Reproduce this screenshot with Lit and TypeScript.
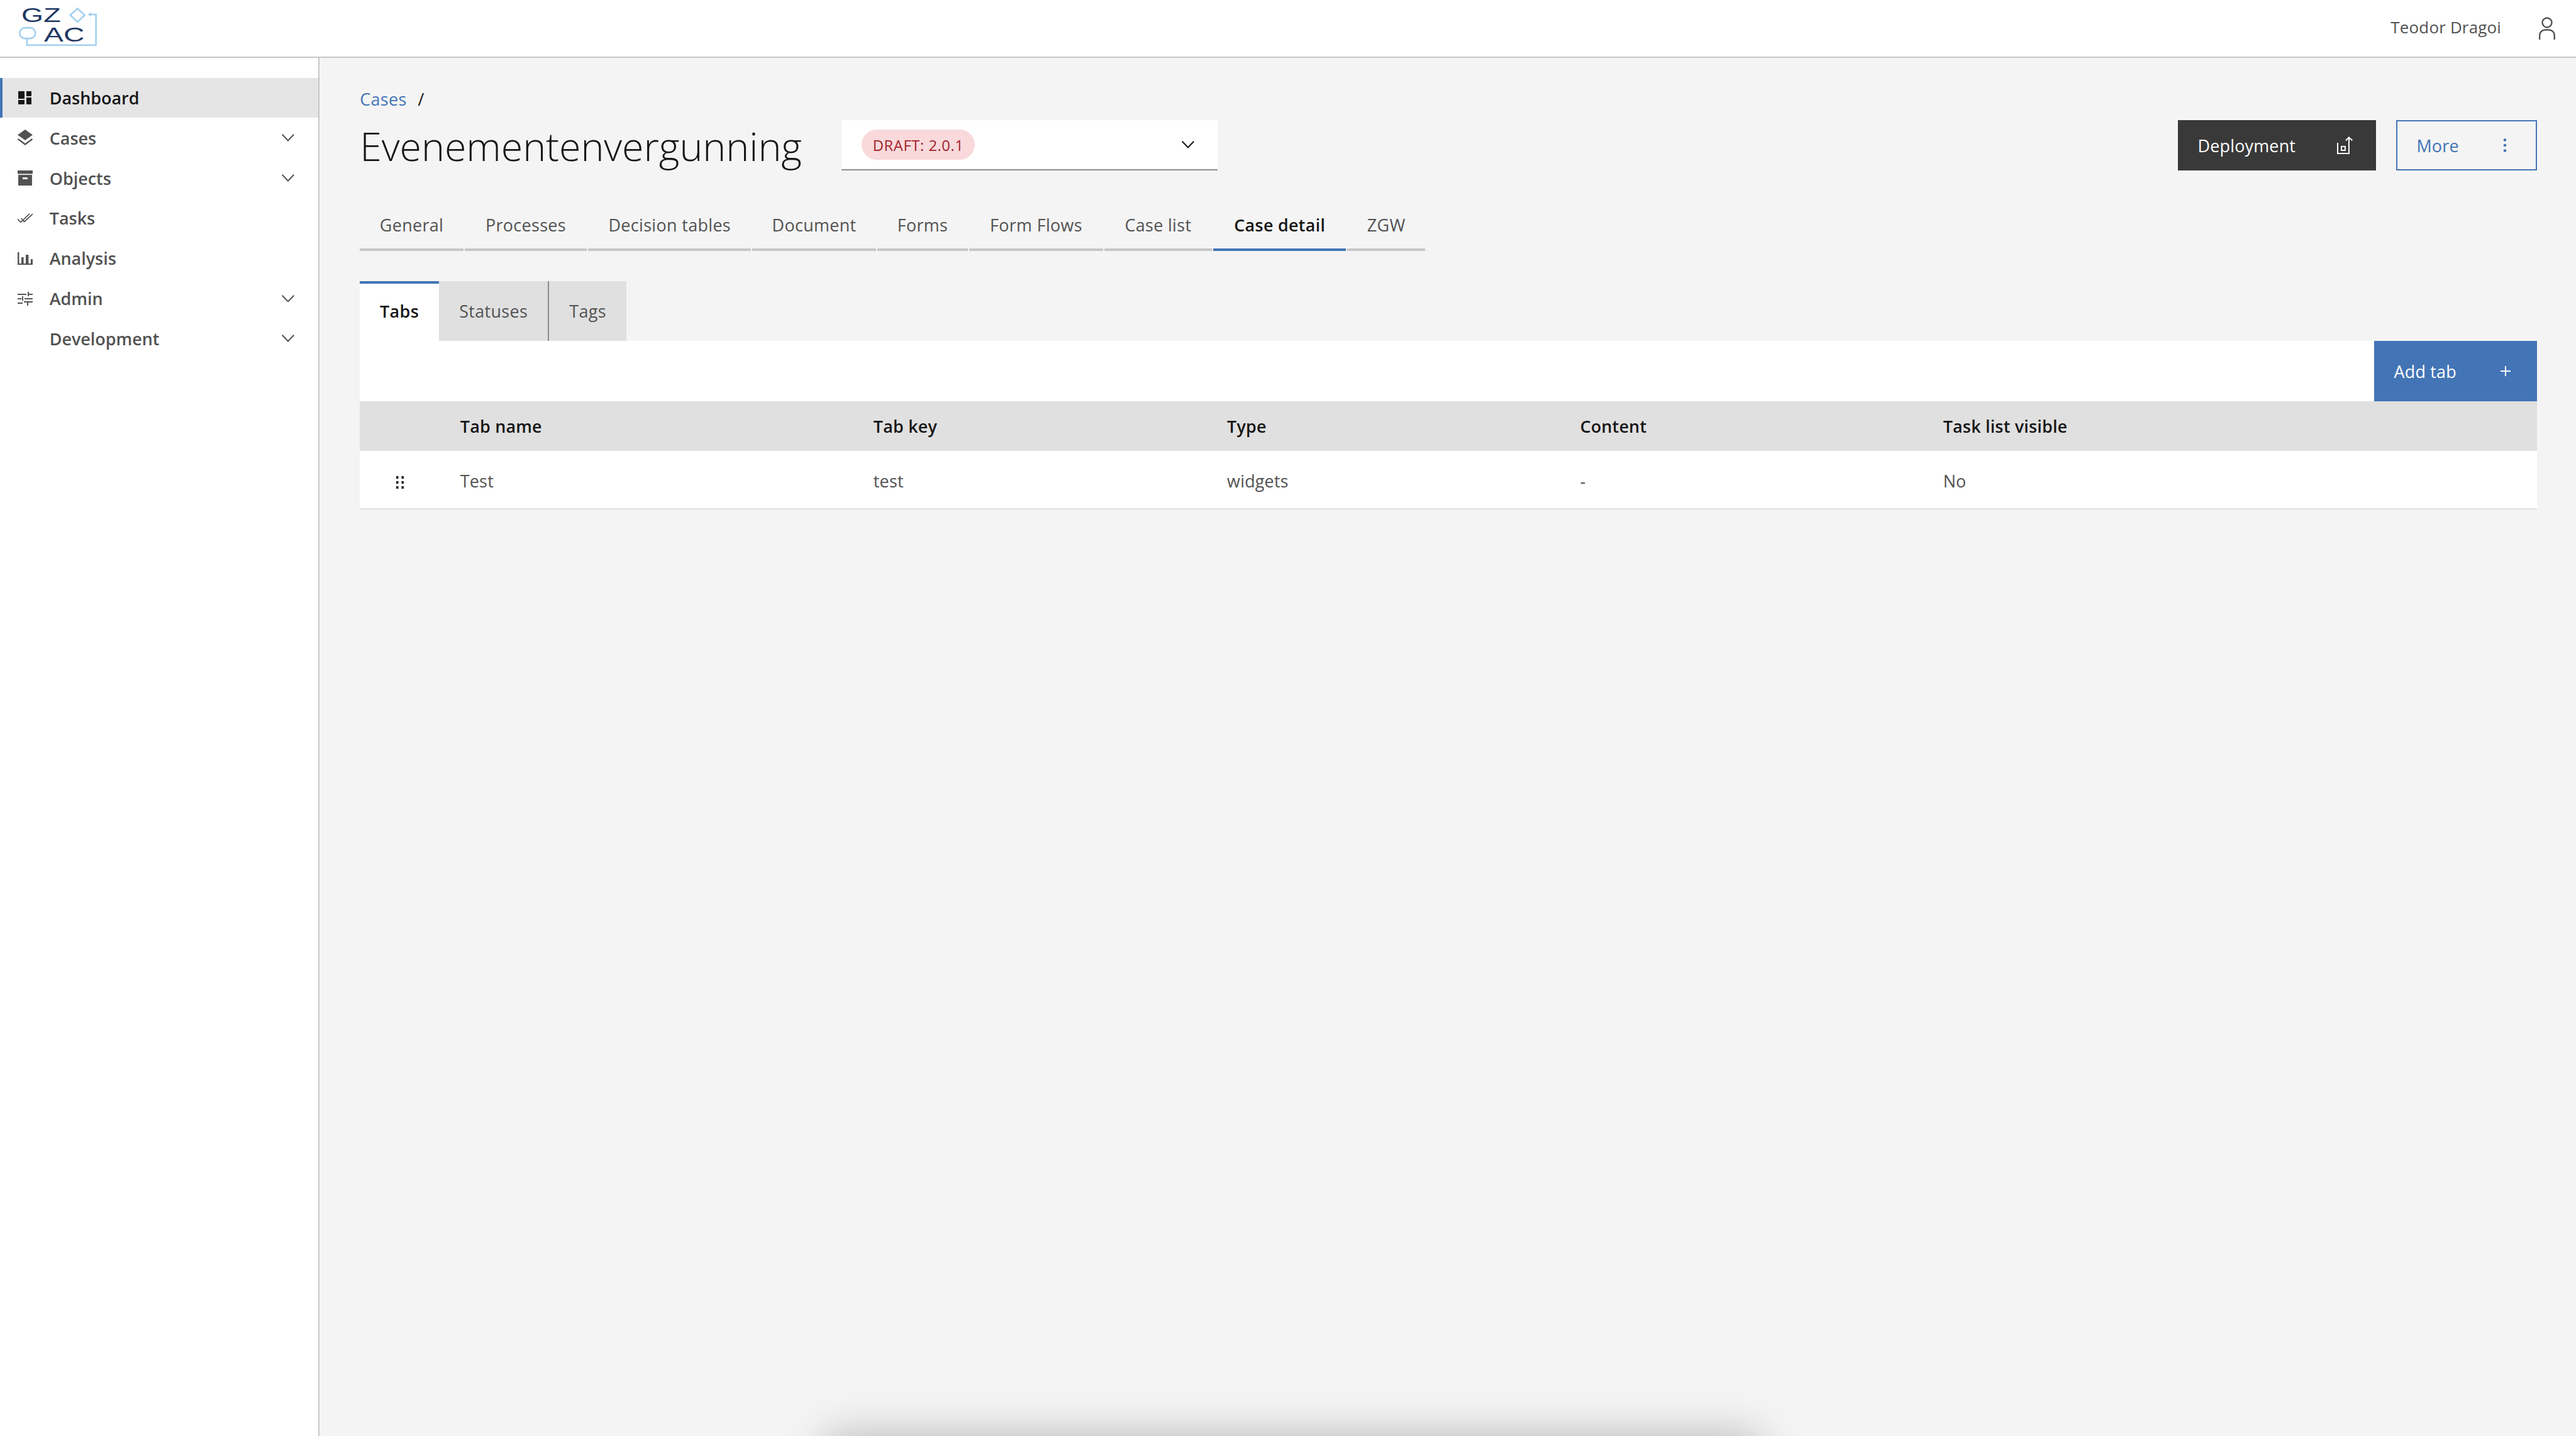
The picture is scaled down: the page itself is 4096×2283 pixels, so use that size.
import { LitElement, html, css, svg } from "lit";
import { customElement } from "lit/decorators.js";

const chevron = html`<svg class="chev" viewBox="0 0 20 12" width="20" height="12"><polyline points="0.7,0.7 10,10.5 19.3,0.7" fill="none" stroke="currentColor" stroke-width="2"/></svg>`;

const icons: Record<string, unknown> = {
  dashboard: svg`<rect x="29" y="145" width="10" height="12"/><rect x="29" y="159" width="10" height="7"/><rect x="42" y="145" width="8" height="8"/><rect x="42" y="155" width="8" height="11"/>`,
  cases: svg`<polygon points="40,207 52,215.5 40,224 28,215.5"/><polyline points="28.5,222 40,230.5 51.5,222" fill="none" stroke="currentColor" stroke-width="2.4"/>`,
  objects: svg`<rect x="28" y="272" width="24" height="5.5"/><path fill-rule="evenodd" d="M29 279h22v17H29z M36 283v3h8v-3z"/>`,
  tasks: svg`<g fill="none" stroke="currentColor" stroke-width="1.7"><polyline points="27,348.5 33,354.5 47,341"/><polyline points="33.5,348 38.5,353.5 52.5,341"/></g>`,
  analysis: svg`<rect x="28" y="402" width="2.4" height="20"/><rect x="28" y="420" width="24" height="2"/><rect x="34" y="410" width="3.6" height="11"/><rect x="41" y="406" width="4.4" height="15"/><rect x="49" y="413" width="3" height="8"/>`,
  admin: svg`<rect x="28" y="468" width="14" height="2"/><rect x="44" y="465" width="2" height="7"/><rect x="46" y="468" width="6" height="2"/><rect x="28" y="475" width="6" height="2"/><rect x="35" y="472" width="2" height="7"/><rect x="39" y="475" width="13" height="2"/><rect x="28" y="482" width="8" height="2"/><rect x="38" y="480" width="14" height="2"/><rect x="43" y="480" width="2" height="7"/>`,
};

const nav = [
  { label: "Dashboard", icon: "dashboard", cy: 156, active: true },
  { label: "Cases", icon: "cases", cy: 220, more: true },
  { label: "Objects", icon: "objects", cy: 284, more: true },
  { label: "Tasks", icon: "tasks", cy: 348 },
  { label: "Analysis", icon: "analysis", cy: 412 },
  { label: "Admin", icon: "admin", cy: 476, more: true },
  { label: "Development", icon: "", cy: 540, more: true },
];

const tabs = [
  { label: "General", w: 165 },
  { label: "Processes", w: 195 },
  { label: "Decision tables", w: 260 },
  { label: "Document", w: 197 },
  { label: "Forms", w: 145 },
  { label: "Form Flows", w: 213 },
  { label: "Case list", w: 172 },
  { label: "Case detail", w: 212, active: true },
  { label: "ZGW", w: 124 },
];

const cols = ["Tab name", "Tab key", "Type", "Content", "Task list visible"];
const cells = ["Test", "test", "widgets", "-", "No"];

@customElement("app-root")
export class AppRoot extends LitElement {
  static styles = css`
    :host { display: block; width: 4096px; height: 2283px; overflow: hidden; }
    * { box-sizing: border-box; }
    .page {
      zoom: 0.997; width: 4108px; height: 2290px; display: flex; flex-direction: column;
      position: relative; overflow: hidden; background: #f4f4f4; color: #525252;
      font-family: "Open Sans", "Noto Sans", sans-serif; font-size: 27px; letter-spacing: 0.2px;
    }
    header {
      height: 92px; flex: none; background: #fff; border-bottom: 2.01px solid #c6c6c6;
      display: flex; align-items: center; padding: 0 33px 0 28px;
    }
    .logo { display: block; margin-right: auto; }
    .user { margin-right: 60px; font-size: 26px; padding-bottom: 4px; }
    .user-icon { display: block; color: #525252; }
    .body { flex: 1; display: flex; min-height: 0; }
    aside {
      width: 510px; flex: none; background: #fff; border-right: 2.01px solid #c6c6c6; padding-top: 32px;
    }
    .nav {
      height: 64px; display: flex; align-items: center; font-weight: 600; padding-right: 39px; letter-spacing: 0;
    }
    .nav.active { background: #e5e5e5; color: #161616; box-shadow: inset 4px 0 0 #4375b6; }
    .nav-icon { width: 24px; height: 28px; margin-left: 28px; margin-right: 27px; flex: none; fill: currentColor; }
    .chev { margin-left: auto; display: block; }
    .nav .chev { color: #525252; }
    main { flex: 1; min-width: 0; padding: 46px 62px 0 64px; }
    .crumb { height: 40px; display: flex; align-items: center; gap: 18px; color: #4375b6; letter-spacing: 0.35px; }
    .crumb span { color: #161616; }
    .head { height: 80px; margin-top: 14px; display: flex; align-items: center; }
    h1 { margin: 0; font-size: 63px; font-weight: 300; color: #161616; letter-spacing: -0.1px; width: 768px; white-space: nowrap; }
    .select {
      width: 600px; height: 80px; background: #fff; border-bottom: 2.01px solid #8d8d8d;
      display: flex; align-items: center; padding: 0 37px 0 32px; color: #161616;
    }
    .badge {
      height: 48px; width: 181px; border-radius: 24px; background: #f9d9db; color: #a2252b;
      font-size: 24px; display: flex; align-items: center; justify-content: center; letter-spacing: 0.5px;
    }
    .actions { margin-left: auto; display: flex; gap: 32px; }
    .btn { height: 80px; display: flex; align-items: center; justify-content: space-between; }
    .deploy { width: 316px; background: #393939; color: #fff; padding: 0 37px 0 32px; }
    .more { width: 225px; border: 2.01px solid #4375b6; color: #4375b6; padding: 0 46px 0 31px; }
    .tabs { display: flex; gap: 2px; height: 80px; margin-top: 48px; }
    .tab {
      display: flex; align-items: center; justify-content: center; padding-top: 1px;
      border-bottom: 4.02px solid #c6c6c6; white-space: nowrap; letter-spacing: 0.35px;
    }
    .tab.active { border-color: #4375b6; color: #161616; font-weight: 600; letter-spacing: 0.3px; }
    .ctabs { display: flex; height: 96px; margin-top: 48px; letter-spacing: 0.35px; }
    .ctab { display: flex; align-items: center; justify-content: center; background: #e0e0e0; }
    .ctab.on { width: 126px; background: #fff; border-top: 4.02px solid #4375b6; color: #161616; font-weight: 600; padding-bottom: 4px; }
    .ctab.st { width: 176px; border-right: 2.01px solid #8d8d8d; }
    .ctab.tg { width: 123px; }
    .toolbar { height: 96px; background: #fff; display: flex; justify-content: flex-end; }
    .add { width: 260px; height: 96px; background: #4375b6; color: #fff; padding: 0 42px 0 32px; }
    .row {
      display: grid; grid-template-columns: 160px 659px 564px 563px 579px 1fr; align-items: center;
    }
    .thead { height: 79px; background: #e0e0e0; color: #161616; font-weight: 600; }
    .tbody { height: 94px; padding-top: 3px; background: #fff; border-bottom: 2.01px solid #e0e0e0; }
    .handle { display: block; margin: 5px 0 0 58px; fill: #161616; }
    .shadow {
      position: absolute; left: 1318px; top: 2290px; width: 1487px; height: 100px;
      box-shadow: 0 0 68px rgba(0, 0, 0, 0.26);
    }
  `;

  render() {
    return html`<div class="page">
      <header>
        <svg class="logo" width="130" height="90" viewBox="28 0 130 90">
          <g fill="#1f3763" font-family="Liberation Sans" font-size="32">
            <text x="34" y="35" textLength="63" lengthAdjust="spacingAndGlyphs">GZ</text>
            <text x="70" y="66" textLength="65" lengthAdjust="spacingAndGlyphs">AC</text>
          </g>
          <g fill="none" stroke="#a3d0f0" stroke-width="2.6">
            <polygon points="123.5,13.5 135,24 123.5,35 112,24"/>
            <polyline points="143,23 153,23 153,72 43,72 43,62"/>
            <rect x="31.3" y="44.3" width="25" height="17" rx="8.5"/>
          </g>
          <polygon points="140,23 145,19.5 145,26.5" fill="#a3d0f0"/>
        </svg>
        <span class="user">Teodor Dragoi</span>
        <svg class="user-icon" width="26" height="36" viewBox="0 0 26 36" fill="none" stroke="currentColor" stroke-width="2.4">
          <circle cx="13" cy="9" r="7.5"/>
          <path d="M1.2 36V29a9 8.5 0 0 1 9-8.5h5.600a9 8.500 0 0 1 9 8.500V36"/>
        </svg>
      </header>
      <div class="body">
        <aside>
          ${nav.map(
            (n) => html`<div class="nav ${n.active ? "active" : ""}">
              <svg class="nav-icon" viewBox="28 ${n.cy - 14} 24 28">${n.icon ? icons[n.icon] : ""}</svg>
              <span>${n.label}</span>
              ${n.more ? chevron : ""}
            </div>`
          )}
        </aside>
        <main>
          <div class="crumb">Cases <span>/</span></div>
          <div class="head">
            <h1>Evenementenvergunning</h1>
            <div class="select">
              <span class="badge">DRAFT: 2.0.1</span>
              ${chevron}
            </div>
            <div class="actions">
              <div class="btn deploy">
                <span>Deployment</span>
                <svg width="26" height="29" viewBox="3726 218 26 29" fill="none" stroke="#fff" stroke-width="2">
                  <polyline points="3728,228 3728,245 3746,245 3746,220"/>
                  <polyline points="3741,224.500 3746,219.500 3751.500,224.500"/>
                  <rect x="3734" y="234" width="6" height="6"/>
                </svg>
              </div>
              <div class="btn more">
                <span>More</span>
                <svg width="6" height="24" viewBox="0 0 6 24" fill="#4375b6">
                  <circle cx="3" cy="3.500" r="2.300"/><circle cx="3" cy="12" r="2.300"/><circle cx="3" cy="20.500" r="2.300"/>
                </svg>
              </div>
            </div>
          </div>
          <div class="tabs">
            ${tabs.map(
              (t) => html`<div class="tab ${t.active ? "active" : ""}" style="width:${t.w}px">${t.label}</div>`
            )}
          </div>
          <div class="ctabs">
            <div class="ctab on">Tabs</div>
            <div class="ctab st">Statuses</div>
            <div class="ctab tg">Tags</div>
          </div>
          <div class="toolbar">
            <div class="btn add">
              <span>Add tab</span>
              <svg width="16" height="16" viewBox="0 0 16 16" fill="none" stroke="#fff" stroke-width="2"><path d="M8 0v16M0 8h16"/></svg>
            </div>
          </div>
          <div class="row thead">
            <span></span>
            ${cols.map((c) => html`<span>${c}</span>`)}
          </div>
          <div class="row tbody">
            <svg class="handle" width="12" height="20" viewBox="0 0 12 20">
              <rect x="0" y="0" width="3.500" height="4"/><rect x="8.500" y="0" width="3.500" height="4"/>
              <rect x="0" y="8" width="3.500" height="4"/><rect x="8.500" y="8" width="3.500" height="4"/>
              <rect x="0" y="16" width="3.500" height="4"/><rect x="8.500" y="16" width="3.500" height="4"/>
            </svg>
            ${cells.map((c) => html`<span>${c}</span>`)}
          </div>
        </main>
      </div>
      <div class="shadow"></div>
    </div>`;
  }
}
